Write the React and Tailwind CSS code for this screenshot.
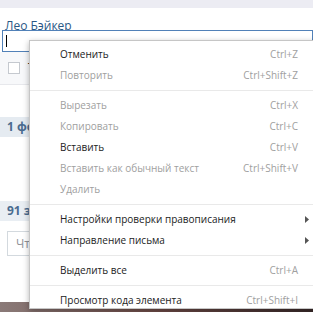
const items = [
  { label: "Отменить", key: "Ctrl+Z", on: true },
  { label: "Повторить", key: "Ctrl+Shift+Z" },
  "sep",
  { label: "Вырезать", key: "Ctrl+X" },
  { label: "Копировать", key: "Ctrl+C" },
  { label: "Вставить", key: "Ctrl+V", on: true },
  { label: "Вставить как обычный текст", key: "Ctrl+Shift+V" },
  { label: "Удалить" },
  "sep",
  { label: "Настройки проверки правописания", sub: true, on: true },
  { label: "Направление письма", sub: true, on: true },
  "sep",
  { label: "Выделить все", key: "Ctrl+A", on: true },
  "sep",
  { label: "Просмотр кода элемента", key: "Ctrl+Shift+I", on: true },
]

const Menu = () => (
  <div className="absolute left-[29px] top-[40px] w-[291px] h-[269px] bg-white border border-[#c6c6c6] shadow-[0_2px_6px_rgba(0,0,0,0.3)] pt-[3px] text-[10px]">
    {items.map((it, i) =>
      it === "sep" ? (
        <div key={i} className="h-[9px] flex items-center">
          <div className="w-full h-px bg-[#e9e9e9]" />
        </div>
      ) : (
        <div key={i} className="h-[21px] flex items-center pl-[30px] pr-[21px]">
          <span className={`flex-1 ${it.on ? "text-[#222]" : "text-[#a0a0a0]"}`}>{it.label}</span>
          {it.key && <span className="text-[#a0a0a0]">{it.key}</span>}
          {it.sub && (
            <svg width="4" height="7" viewBox="0 0 4 7" className="mr-[-11px]">
              <path d="M0 0 L4 3.5 L0 7 Z" fill="#555" />
            </svg>
          )}
        </div>
      )
    )}
  </div>
)

export default function App() {
  return (
    <div className="relative w-[313px] h-[312px] overflow-hidden bg-white text-[11px] font-['Open_Sans',sans-serif]">
      <div className="h-[8px] bg-[#ececf3]" />
      <div className="h-[22px] pl-[5px] pt-[12px] overflow-hidden leading-none text-[12px] text-[#2a5885]">Лео Бэйкер</div>
      <div className="ml-[2px] h-[22px] border border-[#5181b8] bg-white flex items-center pl-[3px]">
        <div className="w-px h-[12px] bg-black" />
      </div>
      <div className="h-[33px] bg-[#f7f8fa] border-b border-[#e7e8ec] pl-[8px] pt-[10px] flex gap-[8px]">
        <div className="w-[12px] h-[12px] border border-[#c5c9cf] bg-white" />
        <span className="text-[#222] text-[12px] leading-[12px]">Т</span>
      </div>
      <div className="h-[32px]" />
      <div className="h-[20px] bg-[#e5ebf1] pl-[7px] flex items-center font-bold text-[#4a6b8f] text-[12px]">
        <span className="w-[22px] overflow-hidden whitespace-nowrap">1 фото</span>
      </div>
      <div className="h-[64px]" />
      <div className="h-[20px] bg-[#e9eef3] pl-[7px] flex items-center font-bold text-[#4a6b8f] text-[12px]">
        <span className="w-[22px] overflow-hidden whitespace-nowrap">91 запись</span>
      </div>
      <div className="mt-[10px] ml-[7px] h-[25px] border border-[#d3d9de] flex items-center pl-[8px] text-[#909399] text-[12px]">
        <span className="w-[14px] overflow-hidden whitespace-nowrap">Что у вас нового?</span>
      </div>
      <div className="mt-[46px] h-[12px] bg-gradient-to-r from-[#8a7a78] via-[#6e4b47] to-[#3a2a2a]" />
      <Menu />
    </div>
  )
}
